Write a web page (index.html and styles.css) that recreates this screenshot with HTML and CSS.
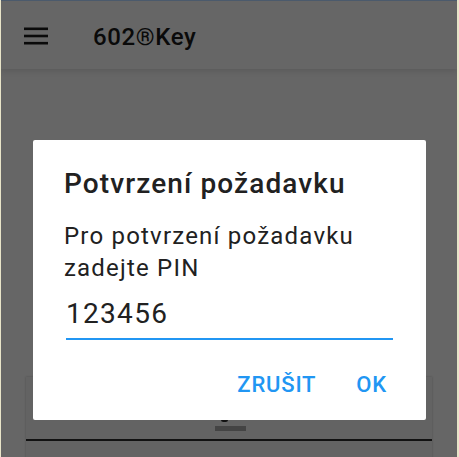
FILE: index.html
```html
<!DOCTYPE html>
<html lang="cs">
<head>
<meta charset="utf-8">
<link rel="stylesheet" href="styles.css">
</head>
<body>
<div class="screen">
  <header class="appbar">
    <div class="menu-icon">
      <svg width="24" height="18" viewBox="0 0 24 18"><rect x="0" y="0.5" width="24" height="2.6" fill="#0a0a0a"/><rect x="0" y="7.7" width="24" height="2.6" fill="#0a0a0a"/><rect x="0" y="14.9" width="24" height="2.6" fill="#0a0a0a"/></svg>
    </div>
    <div class="app-title">602®Key</div>
  </header>
  <main class="content">
    <div class="card">
      <div class="card-top"><span class="dot"></span><span class="bar"></span></div>
      <div class="card-bottom"></div>
    </div>
  </main>
  <div class="dialog">
    <h2 class="dlg-title">Potvrzení požadavku</h2>
    <p class="dlg-msg">Pro potvrzení požadavku<br>zadejte PIN</p>
    <div class="field">123456</div>
    <div class="actions">
      <span class="btn">ZRUŠIT</span>
      <span class="btn">OK</span>
    </div>
  </div>
</div>
</body>
</html>
```
FILE: styles.css
```css
html, body {
  margin: 0;
  padding: 0;
  background: #e8e4c8;
}
.screen {
  position: relative;
  width: 456px;
  height: 457px;
  margin-left: 1px;
  background: #666666;
  border-top: 1px solid #4b5a6c;
  box-sizing: border-box;
  overflow: hidden;
  font-family: Roboto, "Noto Sans", sans-serif;
}
.appbar {
  height: 68px;
  display: flex;
  align-items: center;
  padding-left: 23px;
  background: #666666;
  box-shadow: 0 2px 6px rgba(0,0,0,0.12);
}
.menu-icon {
  display: flex;
  width: 24px;
  height: 18px;
  margin-top: 2px;
}
.app-title {
  margin-left: 45px;
  font-size: 24px;
  font-weight: 500;
  color: #0a0a0a;
  margin-top: 4px;
  letter-spacing: 0.6px;
}
.content {
  padding: 308px 25px 0 25px;
}
.card {
  background: #636363;
  box-shadow: 0 0 2px rgba(0,0,0,0.25);
  height: 120px;
}
.card-top {
  height: 62px;
  border-bottom: 2px solid #111;
  position: relative;
}
.card-top .bar {
  position: absolute;
  left: 189px;
  top: 49px;
  width: 31px;
  height: 5px;
  background: #444;
}
.card-top .dot {
  position: absolute;
  left: 195px;
  top: 40px;
  width: 7px;
  height: 5px;
  border-radius: 3px;
  background: #111;
}
.dialog {
  position: absolute;
  left: 32px;
  top: 139px;
  width: 393px;
  height: 280px;
  box-sizing: border-box;
  background: #ffffff;
  border-radius: 2px;
  padding: 28px 33px 0 31px;
}
.dlg-title {
  margin: 0;
  font-size: 28px;
  font-weight: 500;
  line-height: 32px;
  color: #212121;
  letter-spacing: 1.1px;
}
.dlg-msg {
  margin: 20px 0 0 0;
  font-size: 24px;
  line-height: 32px;
  color: #212121;
  font-weight: 400;
  letter-spacing: 1.2px;
}
.field {
  margin: 12px 0 0 2px;
  font-size: 28px;
  line-height: 36px;
  color: #212121;
  padding-bottom: 6px;
  border-bottom: 2px solid #2196f3;
  letter-spacing: 1.3px;
}
.actions {
  display: flex;
  justify-content: flex-end;
  gap: 40px;
  margin-top: 33px;
  padding-right: 6px;
}
.btn {
  font-size: 22px;
  font-weight: 500;
  color: #2196f3;
  line-height: 24px;
  letter-spacing: 0.8px;
}
```
